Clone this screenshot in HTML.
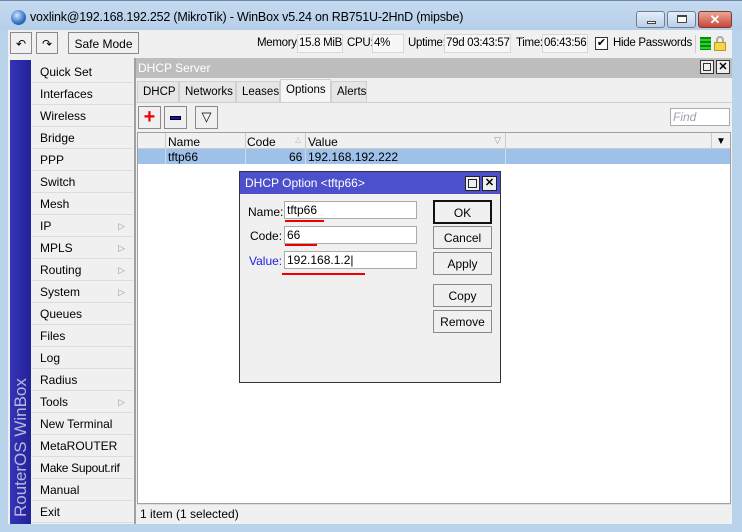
<!DOCTYPE html>
<html><head><style>
*{box-sizing:border-box;margin:0;padding:0}
body{width:742px;height:532px;overflow:hidden;background:#b9d3ea;font-family:"Liberation Sans",sans-serif;font-size:12px;color:#000;position:relative;white-space:nowrap}
.a{position:absolute}
.menu div{position:absolute;left:32px;width:101px;height:22px;line-height:22px;padding-left:8px;border-bottom:1px solid #dcdcdc;font-size:12px}
.menu span{position:absolute;right:8px;top:0;color:#999;font-size:9px}
.fld{position:absolute;background:#f7f7f7;border:1px solid #d8d8d8;height:19px;line-height:17px;padding-left:1px;font-size:11.5px;letter-spacing:-0.3px;overflow:hidden}
.lb{position:absolute;top:37px;font-size:11.5px;letter-spacing:-0.3px}
.btn{position:absolute;border:1px solid #8a8a8a;background:#f0f0f0;text-align:center;line-height:22px}
.inp{position:absolute;background:#fff;border:1px solid #aaa;height:18px;line-height:16px;padding-left:2px;font-size:12px}
.red{position:absolute;height:2px;background:#e00}
.tab{position:absolute;top:81px;height:21px;line-height:21px;padding:0 5px;background:#e6e6e6;border:1px solid #cfcfcf;border-bottom:none;font-size:11.5px}
</style></head><body>
<div class="a" style="left:0;top:0;width:742px;height:30px;background:linear-gradient(#c5daf0,#b6cfe9);border-top:1px solid #6c8aa8"></div>
<div class="a" style="left:11px;top:10px;width:15px;height:15px;border-radius:50%;background:radial-gradient(circle at 40% 35%,#cfe6ff,#2f6fc0 60%,#1a3f7a)"></div>
<div class="a" style="left:30px;top:10px;font-size:12.5px;letter-spacing:-0.2px">voxlink@192.168.192.252 (MikroTik) - WinBox v5.24 on RB751U-2HnD (mipsbe)</div>
<div class="a" style="left:636px;top:11px;width:29px;height:17px;border:1px solid #6d7f96;border-radius:3px;background:linear-gradient(#e4eefb,#bccfe6)"><div class="a" style="left:10px;top:9px;width:9px;height:3px;background:#fff;border:1px solid #444"></div></div>
<div class="a" style="left:667px;top:11px;width:29px;height:17px;border:1px solid #6d7f96;border-radius:3px;background:linear-gradient(#e4eefb,#bccfe6)"><div class="a" style="left:9px;top:3px;width:10px;height:8px;border:1px solid #444;border-top-width:2px;background:#fff"></div></div>
<div class="a" style="left:698px;top:11px;width:34px;height:17px;border:1px solid #7a3a30;border-radius:3px;background:linear-gradient(#e9a796,#c7473a);color:#fff;text-align:center;font-weight:bold;font-size:13px;line-height:15px">✕</div>
<div class="a" style="left:8px;top:30px;width:724px;height:494px;background:#f0f0f0"></div>
<div class="btn" style="left:10px;top:32px;width:22px;height:22px;font-size:12px">↶</div>
<div class="btn" style="left:36px;top:32px;width:22px;height:22px;font-size:12px">↷</div>
<div class="btn" style="left:68px;top:32px;width:71px;height:22px">Safe Mode</div>
<div class="lb" style="left:257px">Memory:</div><div class="fld" style="left:297px;top:34px;width:46px">15.8 MiB</div>
<div class="lb" style="left:347px">CPU:</div><div class="fld" style="left:372px;top:34px;width:32px">4%</div>
<div class="lb" style="left:408px">Uptime:</div><div class="fld" style="left:444px;top:34px;width:67px">79d 03:43:57</div>
<div class="lb" style="left:516px">Time:</div><div class="fld" style="left:542px;top:34px;width:46px">06:43:56</div>
<div class="a" style="left:595px;top:37px;width:13px;height:13px;border:1px solid #333;background:#fff;font-size:11px;line-height:11px;text-align:center">✔</div>
<div class="lb" style="left:613px">Hide Passwords</div>
<div class="a" style="left:695px;top:35px;width:1px;height:18px;background:#ccc"></div>
<div class="a" style="left:700px;top:37px;width:11px;height:13px;background:repeating-linear-gradient(#0a8a0a 0 2px,#2bd02b 2px 4px)"></div>
<div class="a" style="left:716px;top:36px;width:8px;height:7px;border:2px solid #aaa;border-bottom:none;border-radius:4px 4px 0 0"></div>
<div class="a" style="left:714px;top:42px;width:12px;height:9px;background:#f3d64a;border:1px solid #b89a20"></div>
<div class="a" style="left:10px;top:60px;width:21px;height:464px;background:linear-gradient(90deg,#3434b8,#22229a)"></div>
<div class="a" style="left:10px;top:520px;width:464px;height:21px;transform-origin:0 0;transform:rotate(-90deg);color:#b8b8d8;font-size:17px;line-height:21px;padding-left:3px">RouterOS WinBox</div>
<div class="menu">
<div style="top:61px">Quick Set</div><div style="top:83px">Interfaces</div><div style="top:105px">Wireless</div><div style="top:127px">Bridge</div><div style="top:149px">PPP</div><div style="top:171px">Switch</div><div style="top:193px">Mesh</div><div style="top:215px">IP<span>▷</span></div><div style="top:237px">MPLS<span>▷</span></div><div style="top:259px">Routing<span>▷</span></div><div style="top:281px">System<span>▷</span></div><div style="top:303px">Queues</div><div style="top:325px">Files</div><div style="top:347px">Log</div><div style="top:369px">Radius</div><div style="top:391px">Tools<span>▷</span></div><div style="top:413px">New Terminal</div><div style="top:435px">MetaROUTER</div><div style="top:457px;letter-spacing:-0.3px">Make Supout.rif</div><div style="top:479px">Manual</div><div style="top:501px">Exit</div>
</div>
<div class="a" style="left:134px;top:58px;width:598px;height:466px;border-left:2px solid #a0a0a0;background:#f0f0f0"></div>
<div class="a" style="left:136px;top:58px;width:596px;height:20px;background:#bdbdbd;color:#fff;font-size:12px;line-height:20px;padding-left:2px">DHCP Server</div>
<div class="a" style="left:700px;top:60px;width:14px;height:14px;border:1px solid #333;background:#eee"><div class="a" style="left:2px;top:2px;width:8px;height:8px;border:1px solid #333"></div></div>
<div class="a" style="left:716px;top:60px;width:14px;height:14px;border:1px solid #333;background:#eee;font-size:11px;line-height:12px;text-align:center;font-weight:bold">✕</div>
<div class="tab" style="left:137px;width:42px">DHCP</div>
<div class="tab" style="left:179px;width:57px">Networks</div>
<div class="tab" style="left:236px;width:44px">Leases</div>
<div class="tab" style="left:280px;top:79px;height:24px;width:51px;background:#f5f5f5">Options</div>
<div class="tab" style="left:331px;width:36px">Alerts</div>
<div class="a" style="left:136px;top:102px;width:596px;height:1px;background:#cfcfcf"></div>
<div class="btn" style="left:138px;top:106px;width:23px;height:23px;color:#e00;font-weight:bold;font-size:20px;line-height:20px">+</div>
<div class="btn" style="left:164px;top:106px;width:23px;height:23px"><div class="a" style="left:5px;top:9px;width:11px;height:4px;background:#1010d0;border:1px solid #000"></div></div>
<div class="btn" style="left:195px;top:106px;width:23px;height:23px;font-size:13px;line-height:20px">▽</div>
<div class="inp" style="left:670px;top:108px;width:60px;color:#a0a0b0;font-style:italic">Find</div>
<div class="a" style="left:137px;top:132px;width:594px;height:372px;background:#fff;border:1px solid #a0a0a0"></div>
<div class="a" style="left:138px;top:133px;width:592px;height:16px;background:#f0f0f0;border-bottom:1px solid #ccc"></div>
<div class="a" style="left:165px;top:133px;width:1px;height:31px;background:#ccc"></div>
<div class="a" style="left:245px;top:133px;width:1px;height:31px;background:#ccc"></div>
<div class="a" style="left:305px;top:133px;width:1px;height:31px;background:#ccc"></div>
<div class="a" style="left:505px;top:133px;width:1px;height:31px;background:#ccc"></div>
<div class="a" style="left:711px;top:133px;width:1px;height:16px;background:#ccc"></div>
<div class="a" style="left:168px;top:135px">Name</div>
<div class="a" style="left:247px;top:135px">Code</div><div class="a" style="left:295px;top:135px;color:#bbb;font-size:8px">△</div>
<div class="a" style="left:308px;top:135px">Value</div><div class="a" style="left:494px;top:135px;color:#999;font-size:9px">▽</div>
<div class="a" style="left:716px;top:136px;font-size:10px">▼</div>
<div class="a" style="left:138px;top:149px;width:592px;height:15px;background:#9dc1e8"></div>
<div class="a" style="left:165px;top:149px;width:1px;height:15px;background:#cde"></div>
<div class="a" style="left:245px;top:149px;width:1px;height:15px;background:#cde"></div>
<div class="a" style="left:305px;top:149px;width:1px;height:15px;background:#cde"></div>
<div class="a" style="left:505px;top:149px;width:1px;height:15px;background:#cde"></div>
<div class="a" style="left:168px;top:150px">tftp66</div>
<div class="a" style="left:289px;top:150px">66</div>
<div class="a" style="left:308px;top:150px">192.168.192.222</div>
<div class="a" style="left:137px;top:504px;width:594px;height:18px;border-top:1px solid #ddd;padding-left:3px;line-height:18px">1 item (1 selected)</div>
<div class="a" style="left:239px;top:171px;width:262px;height:212px;background:#f0f0f0;border:1px solid #333"></div>
<div class="a" style="left:240px;top:172px;width:260px;height:22px;background:#4c50cc;color:#fff;line-height:22px;padding-left:5px;font-size:12px">DHCP Option &lt;tftp66&gt;</div>
<div class="a" style="left:465px;top:176px;width:15px;height:15px;border:1px solid #222;background:#eee"><div class="a" style="left:2px;top:2px;width:9px;height:9px;border:1px solid #222"></div></div>
<div class="a" style="left:482px;top:176px;width:15px;height:15px;border:1px solid #222;background:#eee;font-size:11px;line-height:13px;text-align:center;font-weight:bold">✕</div>
<div class="a" style="left:248px;top:205px">Name:</div>
<div class="a" style="left:250px;top:229px">Code:</div>
<div class="a" style="left:249px;top:254px;color:#2020e0">Value:</div>
<div class="inp" style="left:284px;top:201px;width:133px">tftp66</div>
<div class="inp" style="left:284px;top:226px;width:133px">66</div>
<div class="inp" style="left:284px;top:251px;width:133px">192.168.1.2|</div>
<div class="red" style="left:285px;top:220px;width:39px"></div>
<div class="red" style="left:285px;top:244px;width:32px"></div>
<div class="red" style="left:282px;top:273px;width:83px"></div>
<div class="btn" style="left:433px;top:200px;width:59px;height:24px;border:2px solid #111">OK</div>
<div class="btn" style="left:433px;top:226px;width:59px;height:23px">Cancel</div>
<div class="btn" style="left:433px;top:252px;width:59px;height:23px">Apply</div>
<div class="btn" style="left:433px;top:284px;width:59px;height:23px">Copy</div>
<div class="btn" style="left:433px;top:310px;width:59px;height:23px">Remove</div>
</body></html>
